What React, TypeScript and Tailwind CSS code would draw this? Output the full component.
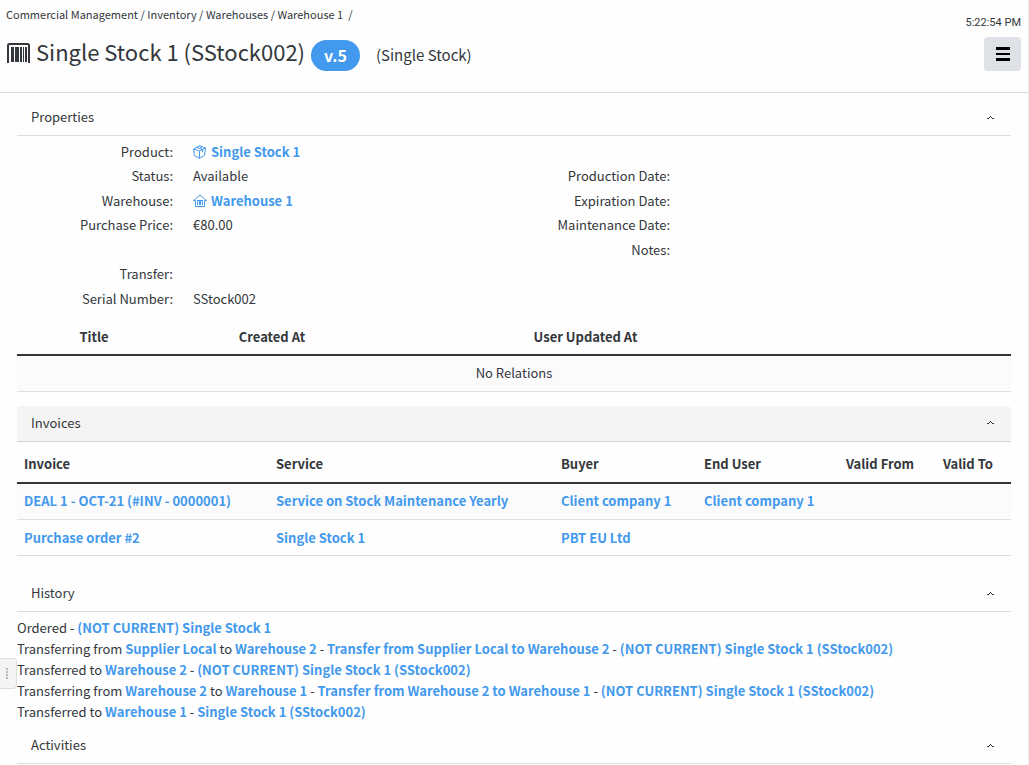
import React from "react";

function Chevron() {
  return (
    <svg width="7" height="4" viewBox="0 0 7 4" fill="#33373b" shapeRendering="crispEdges" aria-hidden="true">
      <path d="M3 0h1v1H3zM2 1h1v1H2zM4 1h1v1H4zM0 2h2v1H0zM5 2h2v1H5z" />
    </svg>
  );
}

function SectionHeader({ title, shaded = false }: { title: string; shaded?: boolean }) {
  return (
    <h2
      className={
        shaded
          ? "rounded-t border-b border-[#d5d5d6] bg-[#f4f4f4]"
          : "rounded-t border-b border-[#dededf]"
      }
    >
      <button type="button" aria-expanded="true" className="flex h-[35px] w-full items-center justify-between pr-[17px] pb-0.5 pl-3.5 text-left">
        <span>{title}</span>
        <span className="pt-0.5">
          <Chevron />
        </span>
      </button>
    </h2>
  );
}

function A({ children }: { children: React.ReactNode }) {
  return (
    <a href="#" className="font-bold text-[#4299ed]">
      {children}
    </a>
  );
}

function BoxIcon() {
  return (
    <svg width="14" height="14" viewBox="0 0 14 14" fill="none" stroke="currentColor" strokeWidth="1" strokeLinejoin="round" aria-hidden="true">
      <path d="M6.500 0.700 12.500 3 11.500 10.500 6.500 13.300 1.200 10.500 0.800 4zM0.800 4 6.500 6 12.500 3M6.500 6v7.300M3.500 2.300 9.500 4.500v2.800M6.500 0.700 9.500 4.500" />
    </svg>
  );
}

function HouseIcon() {
  return (
    <svg width="14" height="14" viewBox="0 0 14 14" fill="none" stroke="currentColor" strokeWidth="1" aria-hidden="true">
      <path d="M0.500 6.500 7 1l6.500 5.500M0.500 6.500h2v6h9v-6h2M2.500 12.500h9" />
      <path d="M4 6.500h6" />
      <path fill="currentColor" stroke="none" d="M4 6h1v5H4zM6 6h2v5H6zM9 6h1v5H9z" />
    </svg>
  );
}

function BarcodeIcon() {
  return (
    <svg width="24" height="22" viewBox="0 0 24 22" fill="none" stroke="#33373b" aria-hidden="true">
      <path strokeWidth="2" d="M2 21V3.500Q2 2 3.500 2H21.500Q23 2 23 3.500V21" />
      <path fill="#33373b" stroke="none" d="M5 5h3v15H5zM9 5h4v15H9zM14 5h2v15h-2zM17 5h1v15h-1zM19 5h2v15h-2z" />
    </svg>
  );
}

const left: [string, React.ReactNode][] = [
  ["Product:", <span className="flex items-center gap-1 text-[#4299ed]"><BoxIcon /><A>Single Stock 1</A></span>],
  ["Status:", "Available"],
  ["Warehouse:", <span className="flex items-center gap-1 text-[#4299ed]"><HouseIcon /><A>Warehouse 1</A></span>],
  ["Purchase Price:", "€80.00"],
  ["", ""],
  ["Transfer:", ""],
  ["Serial Number:", "SStock002"],
];

const right = ["", "Production Date:", "Expiration Date:", "Maintenance Date:", "Notes:"];

const invoices = [
  ["DEAL 1 - OCT-21 (#INV - 0000001)", "Service on Stock Maintenance Yearly", "Client company 1", "Client company 1"],
  ["Purchase order #2", "Single Stock 1", "PBT EU Ltd", ""],
];

export default function App() {
  return (
    <div className="relative min-h-screen border-r border-[#ececec] bg-[#fefefe] font-['Noto_Sans_CJK_SC',sans-serif] text-[13px] leading-[21px] text-[#33373b]">
      <header className="flex h-[93px] justify-between border-b border-[#dadadb] pr-[7px] pl-1.5">
        <div>
          <nav aria-label="Breadcrumb" className="pt-1 text-[11px] whitespace-pre">
            <a href="#">Commercial Management</a> / <a href="#">Inventory</a> / <a href="#">Warehouses</a> / <a href="#">Warehouse 1</a>{"  /"}
          </nav>
          <div className="mt-2.5 flex h-8 items-center">
            <span className="mt-1">
              <BarcodeIcon />
            </span>
            <h1 className="ml-1.5 text-[22px] leading-8">Single Stock 1 (SStock002)</h1>
            <span className="mt-2 ml-1.5 flex h-[31px] items-center rounded-full bg-[#4299ed] px-[13px] text-[16px] font-bold text-white">v.5</span>
            <span className="mt-1.5 ml-4 text-[15px]">(Single Stock)</span>
          </div>
        </div>
        <div className="flex flex-col items-end">
          <time className="mt-3 font-[Roboto,sans-serif] text-[11px]">5:22:54 PM</time>
          <button type="button" aria-label="Menu" className="mt-1 flex h-[34px] w-[37px] items-center justify-center rounded bg-[#dee2e6]">
            <svg width="14" height="14" viewBox="0 0 14 14" fill="#000" aria-hidden="true">
              <path d="M0 0h14v3H0zM0 6h14v2H0zM0 11h14v3H0z" />
            </svg>
          </button>
        </div>
      </header>

      <main className="pt-[7px] pr-[17px] pl-[17px]">
        <SectionHeader title="Properties" />
        <div className="grid grid-cols-2 pt-[5px]">
          <dl>
            {left.map(([label, value], i) => (
              <div key={i} className={i % 2 ? "flex h-[25px] items-start gap-5" : "flex h-6 items-start gap-5"}>
                <dt className="w-[156px] text-right">{label}</dt>
                <dd>{value}</dd>
              </div>
            ))}
          </dl>
          <dl>
            {right.map((label, i) => (
              <div key={i} className={i % 2 ? "flex h-[25px] items-start" : "flex h-6 items-start"}>
                <dt className="w-[156px] text-right">{label}</dt>
                <dd />
              </div>
            ))}
          </dl>
        </div>

        <table className="mt-1.5 w-full table-fixed border-collapse">
          <colgroup>
            <col className="w-[154px]" />
            <col className="w-[202px]" />
            <col className="w-[425px]" />
            <col />
          </colgroup>
          <thead>
            <tr className="h-[37px] border-b-2 border-[#33373b]">
              <th>Title</th>
              <th>Created At</th>
              <th>User Updated At</th>
              <td />
            </tr>
          </thead>
          <tbody>
            <tr className="h-9 border-b border-[#dededf] bg-[#fbfbfb]">
              <td colSpan={4} className="pb-0.5 text-center">No Relations</td>
            </tr>
          </tbody>
        </table>

        <div className="mt-3.5">
          <SectionHeader title="Invoices" shaded />
          <table className="w-full table-fixed border-collapse text-left">
            <colgroup>
              <col className="w-[252px]" />
              <col className="w-[285px]" />
              <col className="w-[143px]" />
              <col className="w-[142px]" />
              <col className="w-[97px]" />
              <col />
            </colgroup>
            <thead>
              <tr className="h-[41px] border-b-2 border-[#33373b] whitespace-nowrap">
                {["Invoice", "Service", "Buyer", "End User", "Valid From", "Valid To"].map((h) => (
                  <th key={h} className="px-[7px] pt-1">{h}</th>
                ))}
              </tr>
            </thead>
            <tbody>
              {invoices.map((row, i) => (
                <tr key={i} className={i === 0 ? "h-[37px] border-b border-[#dededf] bg-[#fbfbfb]" : "h-9 border-b border-[#dededf]"}>
                  {row.map((cell, j) => (
                    <td key={j} className="px-[7px] pb-px whitespace-nowrap"><A>{cell}</A></td>
                  ))}
                  <td />
                  <td />
                </tr>
              ))}
            </tbody>
          </table>
        </div>

        <div className="mt-5">
          <SectionHeader title="History" />
          <div className="pt-[5px] whitespace-nowrap">
            <p>Ordered - <A>(NOT CURRENT) Single Stock 1</A></p>
            <p>Transferring from <A>Supplier Local</A> to <A>Warehouse 2</A> - <A>Transfer from Supplier Local to Warehouse 2</A> - <A>(NOT CURRENT) Single Stock 1 (SStock002)</A></p>
            <p>Transferred to <A>Warehouse 2</A> - <A>(NOT CURRENT) Single Stock 1 (SStock002)</A></p>
            <p>Transferring from <A>Warehouse 2</A> to <A>Warehouse 1</A> - <A>Transfer from Warehouse 2 to Warehouse 1</A> - <A>(NOT CURRENT) Single Stock 1 (SStock002)</A></p>
            <p>Transferred to <A>Warehouse 1</A> - <A>Single Stock 1 (SStock002)</A></p>
          </div>
        </div>

        <div className="mt-1.5">
          <SectionHeader title="Activities" />
        </div>
      </main>

      <button type="button" aria-label="Open side panel" className="absolute top-[658px] left-0 flex h-[31px] w-[17px] items-center justify-center rounded-r border border-l-0 border-[#dededf] bg-[#f4f4f4] pr-0.5">
        <svg width="2" height="11" viewBox="0 0 2 11" fill="#b9b9b9" aria-hidden="true">
          <path d="M0 0h2v2H0zM0 3h2v2H0zM0 6h2v2H0zM0 9h2v2H0z" />
        </svg>
      </button>
    </div>
  );
}
